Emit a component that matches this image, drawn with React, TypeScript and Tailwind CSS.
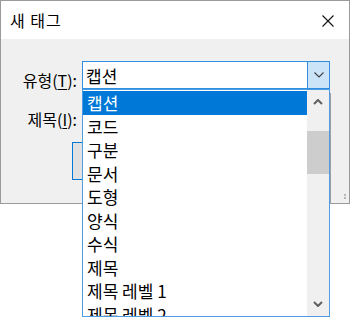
import React from "react";

const items = ["캡션", "코드", "구분", "문서", "도형", "양식", "수식", "제목", "제목 레벨 1", "제목 레벨 2"];

export default function App() {
  return (
    <div
      className="relative w-[350px] h-[317px] bg-white overflow-hidden text-black"
      style={{ fontFamily: "'Noto Sans CJK KR', 'Noto Sans', sans-serif" }}
    >
      {/* dialog */}
      <div className="w-[350px] h-[204px] border border-[#9a9a9a] bg-[#f0f0f0] flex flex-col">
        <div className="h-[38px] bg-white flex items-center justify-between pl-[9px] pr-[15px]">
          <span className="text-[16px] leading-none tracking-[1px]">새 태그</span>
          <svg width="12" height="12" viewBox="0 0 12 12" className="mt-[1px]">
            <path d="M0.5 0.5 L11.5 11.5 M11.5 0.5 L0.5 11.5" stroke="#111" strokeWidth="1.1" />
          </svg>
        </div>
        <div className="relative flex-1 flex flex-col">
          <div className="flex items-start mt-[22px]">
            <div className="w-[76px] text-right text-[16px] leading-none mt-[11px]">
              유형(<span className="underline underline-offset-2">T</span>):
            </div>
            <div className="ml-[5px] w-[248px] h-[28px] border border-[#2f8ee0] bg-white flex">
              <div className="flex-1 flex items-center pl-[3px] text-[17px] leading-none">캡션</div>
              <div className="w-[22px] h-full border-l border-[#2f8ee0] bg-[#cce4f7] flex items-center justify-center">
                <svg width="10" height="6" viewBox="0 0 10 6">
                  <path d="M0.5 0.5 L5 5 L9.5 0.5" stroke="#404040" strokeWidth="1.1" fill="none" />
                </svg>
              </div>
            </div>
          </div>
          <div className="flex mt-[22px]">
            <div className="w-[76px] text-right text-[16px] leading-none">
              제목(<span className="underline underline-offset-2">I</span>):
            </div>
          </div>
          <div className="ml-[71px] mt-[15px] w-[110px] h-[38px] border border-[#0078d7] bg-[#e1e1e1]" />
          <div className="absolute left-[329px] top-[54px] w-[19px] h-[110px] border-l border-[#a0a0a0]">
            <div className="absolute right-[3px] bottom-[4px] flex flex-col gap-[1px]">
              <div className="w-[2px] h-[2px] bg-[#b8b8b8]" />
              <div className="w-[2px] h-[2px] bg-[#b8b8b8]" />
            </div>
          </div>
        </div>
      </div>

      {/* dropdown list */}
      <div className="absolute left-[82px] top-[89px] w-[248px] h-[228px] border border-[#4d9be0] bg-white flex">
        <div className="flex-1 pt-[1px] overflow-hidden">
          {items.map((it, i) => (
            <div
              key={it}
              className={
                "h-[23.5px] flex items-center pl-[4px] text-[17px] leading-none whitespace-nowrap " +
                (i === 0 ? "bg-[#0078d7] text-white" : "text-black")
              }
            >
              {it}
            </div>
          ))}
        </div>
        <div className="w-[22px] h-full bg-[#f0f0f0] flex flex-col">
          <div className="h-[24px] flex items-center justify-center">
            <svg width="10" height="6" viewBox="0 0 10 6">
              <path d="M1 5 L5 1 L9 5" stroke="#606060" strokeWidth="2" fill="none" />
            </svg>
          </div>
          <div className="h-[17px]" />
          <div className="h-[43px] bg-[#cdcdcd]" />
          <div className="flex-1" />
          <div className="h-[24px] flex items-center justify-center">
            <svg width="10" height="6" viewBox="0 0 10 6">
              <path d="M1 1 L5 5 L9 1" stroke="#606060" strokeWidth="2" fill="none" />
            </svg>
          </div>
        </div>
      </div>
    </div>
  );
}
